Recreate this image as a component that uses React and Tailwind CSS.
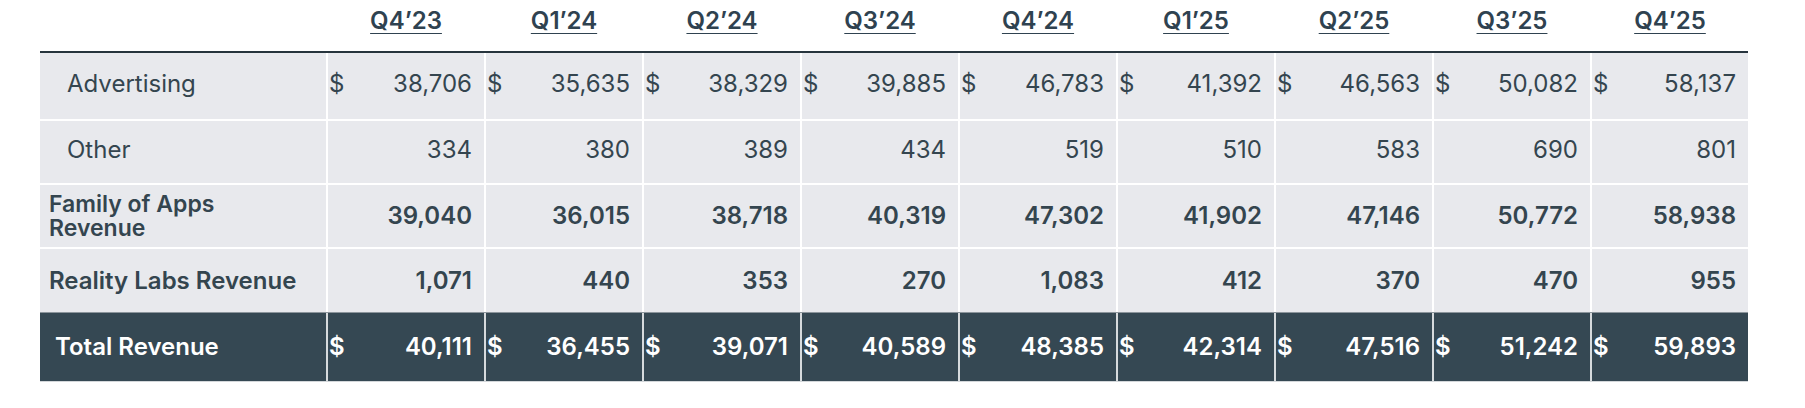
import React from "react";

const quarters = ["Q4’23", "Q1’24", "Q2’24", "Q3’24", "Q4’24", "Q1’25", "Q2’25", "Q3’25", "Q4’25"];

const rows = [
  {
    label: "Advertising",
    kind: "sub",
    dollar: true,
    h: "h-[66px]",
    values: ["38,706", "35,635", "38,329", "39,885", "46,783", "41,392", "46,563", "50,082", "58,137"],
  },
  {
    label: "Other",
    kind: "sub",
    dollar: false,
    h: "h-[62px]",
    values: ["334", "380", "389", "434", "519", "510", "583", "690", "801"],
  },
  {
    label: "fam",
    kind: "bold",
    dollar: false,
    h: "h-[62px]",
    values: ["39,040", "36,015", "38,718", "40,319", "47,302", "41,902", "47,146", "50,772", "58,938"],
  },
  {
    label: "Reality Labs Revenue",
    kind: "bold",
    dollar: false,
    h: "h-[63px]",
    values: ["1,071", "440", "353", "270", "1,083", "412", "370", "470", "955"],
  },
];

const total = ["40,111", "36,455", "39,071", "40,589", "48,385", "42,314", "47,516", "51,242", "59,893"];

function LightRow({ row, first }) {
  const bold = row.kind === "bold";
  return (
    <div className={`flex ${row.h} bg-[#e8e9ed] ${first ? "" : "border-t-2 border-white"} box-content`}>
      <div
        className={`w-[286px] shrink-0 flex items-center ${
          bold ? "pl-[9px] font-semibold" : "pl-[27px] pb-1"
        }`}
      >
        {row.label === "fam" ? (
          <div className="flex flex-col text-[23px] leading-[24px]">
            <span>Family of Apps</span>
            <span>Revenue</span>
          </div>
        ) : (
          <span>{row.label}</span>
        )}
      </div>
      {row.values.map((v, i) => (
        <div
          key={i}
          className={`w-[158px] shrink-0 border-l-2 border-white flex items-center justify-between pl-[1px] pr-3 ${
            bold ? "font-semibold" : "pb-1"
          }`}
        >
          <span>{row.dollar ? "$" : ""}</span>
          <span>{v}</span>
        </div>
      ))}
    </div>
  );
}

export default function App() {
  return (
    <div className="w-[1805px] h-[408px] bg-white pl-[40px] font-['Inter','Noto_Sans',sans-serif] text-[24px] text-[#34454f]">
      <div className="flex h-[51px] pt-[6px]">
        <div className="w-[286px] shrink-0" />
        {quarters.map((q) => (
          <div key={q} className="w-[158px] shrink-0 flex justify-center pl-[2px]">
            <span className="font-semibold leading-[29px] underline underline-offset-[4px] decoration-1 text-[#2f4250]">
              {q}
            </span>
          </div>
        ))}
      </div>
      <div className="w-[1708px] border-t-2 border-[#26343d]">
        {rows.map((r, i) => (
          <LightRow key={i} row={r} first={i === 0} />
        ))}
        <div className="flex h-[68px] bg-[#354853] border-t border-[#8c959c] border-b border-b-[#d3d7da] box-content text-white font-semibold">
          <div className="w-[286px] shrink-0 flex items-center pl-[15px]">
            <span>Total Revenue</span>
          </div>
          {total.map((v, i) => (
            <div
              key={i}
              className="w-[158px] shrink-0 border-l-2 border-[#d6dadd] flex items-center justify-between pl-[1px] pr-3"
            >
              <span>$</span>
              <span>{v}</span>
            </div>
          ))}
        </div>
      </div>
    </div>
  );
}
